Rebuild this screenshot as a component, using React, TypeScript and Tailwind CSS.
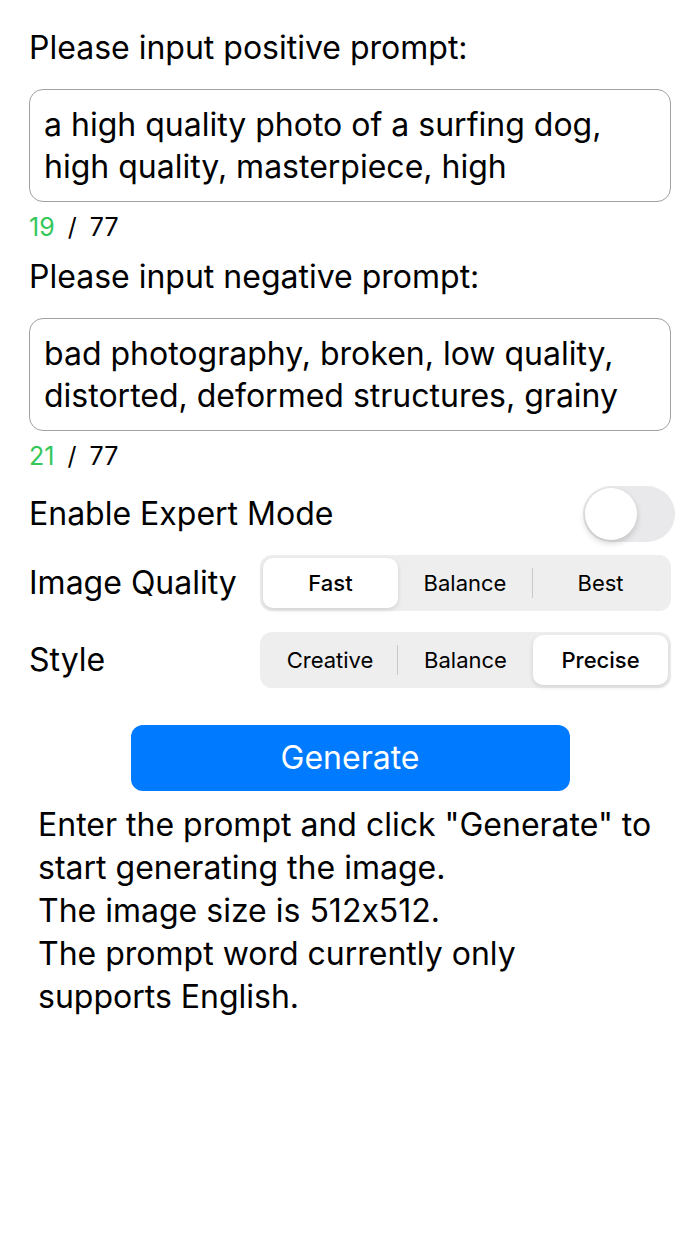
const font = { fontFamily: 'Inter, "Noto Sans", sans-serif' };

const Segmented = ({ options, selected, dividerAfter }: { options: string[]; selected: number; dividerAfter: number }) => {
  return (
    <div className="flex flex-row items-center w-[411px] h-[56px] rounded-[12px] bg-[#eeeeef] p-[3px]">
      {options.map((o, i) => (
        <div key={o} className="flex flex-row items-center flex-1 h-full">
          <div
            className={
              i === selected
                ? 'flex items-center justify-center flex-1 h-full rounded-[10px] bg-white shadow-[0_2px_5px_rgba(0,0,0,0.12)] text-[22px] font-medium text-black'
                : 'flex items-center justify-center flex-1 h-full text-[22px] text-black'
            }
          >
            {o}
          </div>
          {i === dividerAfter && <div className="w-px h-[30px] bg-[#c7c7cc]" />}
        </div>
      ))}
    </div>
  );
};

const App = () => {
  return (
    <div className="w-[700px] h-[1244px] bg-white text-black [font-feature-settings:'calt'_0]" style={font}>
      <div className="flex flex-col px-[29px] pt-[28px]">
        <p className="text-[32px] leading-[40px]">Please input positive prompt:</p>

        <div className="mt-[21px] h-[113px] w-[642px] rounded-[14px] border-[1.5px] border-[#a0a0a5] px-[14px] pt-[14px]">
          <p className="text-[32px] leading-[42px]">
            a high quality photo of a surfing dog,
            <br />
            high quality, masterpiece, high
          </p>
        </div>

        <p className="mt-[10px] text-[25px] leading-[30px]">
          <span className="text-[#34c759]">19</span> <span className="ml-[6px]">/</span> <span className="ml-[6px]">77</span>
        </p>

        <p className="mt-[15px] text-[32px] leading-[40px]">Please input negative prompt:</p>

        <div className="mt-[21px] h-[113px] w-[642px] rounded-[14px] border-[1.5px] border-[#a0a0a5] px-[14px] pt-[14px]">
          <p className="text-[32px] leading-[42px]">
            bad photography, broken, low quality,
            <br />
            distorted, deformed structures, grainy
          </p>
        </div>

        <p className="mt-[10px] text-[25px] leading-[30px]">
          <span className="text-[#34c759]">21</span> <span className="ml-[6px]">/</span> <span className="ml-[6px]">77</span>
        </p>

        <div className="mt-[15px] flex flex-row items-center justify-between h-[56px]">
          <p className="text-[32px]">Enable Expert Mode</p>
          <div className="relative w-[92px] h-[56px] mr-[-4px] rounded-full bg-[#e9e9eb]">
            <div className="absolute left-[2px] top-[2px] w-[52px] h-[52px] rounded-full bg-white shadow-[0_3px_6px_rgba(0,0,0,0.18)]" />
          </div>
        </div>

        <div className="mt-[13px] flex flex-row items-center justify-between">
          <p className="text-[32px]">Image Quality</p>
          <Segmented options={['Fast', 'Balance', 'Best']} selected={0} dividerAfter={1} />
        </div>

        <div className="mt-[21px] flex flex-row items-center justify-between">
          <p className="text-[32px]">Style</p>
          <Segmented options={['Creative', 'Balance', 'Precise']} selected={2} dividerAfter={0} />
        </div>

        <div className="mt-[37px] flex justify-center">
          <button className="w-[439px] h-[66px] rounded-[12px] bg-[#007aff] text-white text-[32px]">Generate</button>
        </div>

        <p className="mt-[12px] px-[9px] text-[32px] leading-[43px]">
          Enter the prompt and click "Generate" to
          <br />
          start generating the image.
          <br />
          The image size is 512x512.
          <br />
          The prompt word currently only
          <br />
          supports English.
        </p>
      </div>
    </div>
  );
};

export default App;
